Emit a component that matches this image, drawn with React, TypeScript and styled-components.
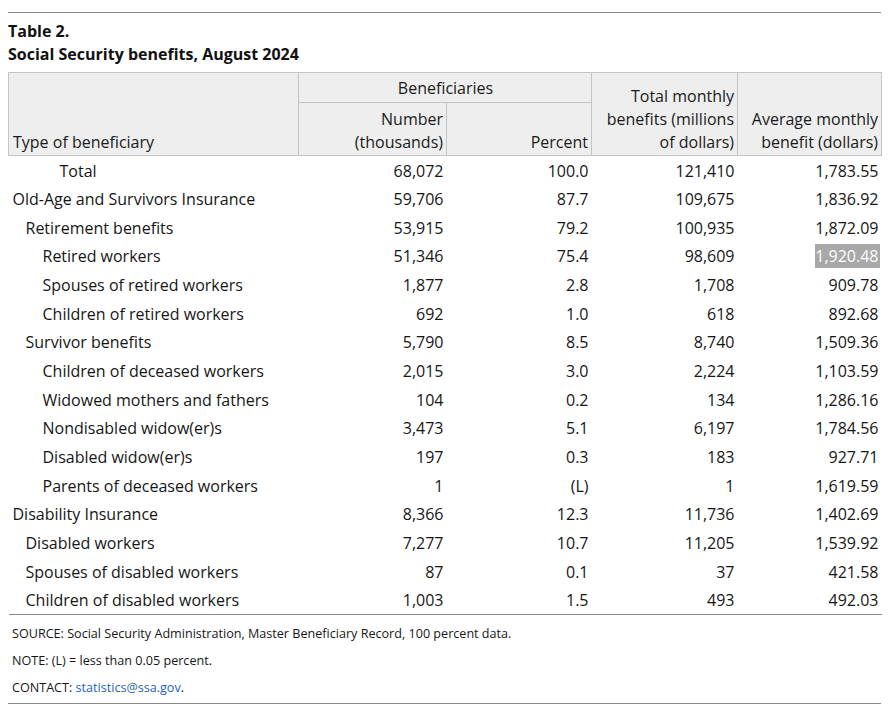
import React from "react";
import styled, { createGlobalStyle } from "styled-components";

const GlobalStyle = createGlobalStyle`
  html, body { margin: 0; padding: 0; background: #ffffff; }
  body { font-family: "Segoe UI", "Open Sans", "Noto Sans", sans-serif; color: #161616; }
`;

const Page = styled.div`
  padding: 12px 8px 0 8px;
  width: 873px;
`;

const TopRule = styled.hr`
  margin: 0;
  border: 0;
  border-top: 1px solid #8a8a8a;
`;

const Caption = styled.div`
  padding: 7px 0 6px 0;
  font-weight: 700;
  font-size: 16px;
  line-height: 23px;
  color: #111;
`;

const Table = styled.table`
  width: 873px;
  border-collapse: collapse;
  table-layout: fixed;
  font-size: 16px;
  border-bottom: 1px solid #8a8a8a;
`;

const HeadCell = styled.th<{ $align?: string; $valign?: string; $height?: number }>`
  background: #eeeeee;
  border: 1px solid #c4c4c4;
  font-weight: 400;
  color: #1a1a1a;
  text-align: ${(p) => p.$align || "right"};
  vertical-align: ${(p) => p.$valign || "bottom"};
  line-height: 23px;
  padding: 3px 3px 1px 4px;
  height: ${(p) => (p.$height ? `${p.$height}px` : "auto")};
  box-sizing: border-box;
  white-space: nowrap;
`;

const Row = styled.tr`
  height: 28.67px;
`;

const LabelCell = styled.td<{ $indent: number }>`
  padding: 2px 4px 0 ${(p) => 4 + p.$indent}px;
  line-height: 23px;
  text-align: left;
  white-space: nowrap;
`;

const NumCell = styled.td`
  padding: 2px 3px 0 4px;
  line-height: 23px;
  text-align: right;
  white-space: nowrap;
`;

const Highlight = styled.span`
  background: #a8a8a8;
  color: #ffffff;
  padding: 1px 1px 1px 0;
  margin-right: -1px;
`;

const Notes = styled.div`
  padding: 5px 4px 2px 4px;
  border-bottom: 1px solid #8a8a8a;
  font-size: 12.6px;
  line-height: 27px;
  color: #161616;
`;

const Note = styled.p`
  margin: 0;
`;

const Link = styled.a`
  color: #1f5fc4;
  text-decoration: none;
`;

type RowData = {
  label: string;
  indent: number;
  num: string;
  pct: string;
  total: string;
  avg: string;
  highlight?: boolean;
};

const rows: RowData[] = [
  { label: "Total", indent: 47, num: "68,072", pct: "100.0", total: "121,410", avg: "1,783.55" },
  { label: "Old-Age and Survivors Insurance", indent: 0, num: "59,706", pct: "87.7", total: "109,675", avg: "1,836.92" },
  { label: "Retirement benefits", indent: 13, num: "53,915", pct: "79.2", total: "100,935", avg: "1,872.09" },
  { label: "Retired workers", indent: 30, num: "51,346", pct: "75.4", total: "98,609", avg: "1,920.48", highlight: true },
  { label: "Spouses of retired workers", indent: 30, num: "1,877", pct: "2.8", total: "1,708", avg: "909.78" },
  { label: "Children of retired workers", indent: 30, num: "692", pct: "1.0", total: "618", avg: "892.68" },
  { label: "Survivor benefits", indent: 13, num: "5,790", pct: "8.5", total: "8,740", avg: "1,509.36" },
  { label: "Children of deceased workers", indent: 30, num: "2,015", pct: "3.0", total: "2,224", avg: "1,103.59" },
  { label: "Widowed mothers and fathers", indent: 30, num: "104", pct: "0.2", total: "134", avg: "1,286.16" },
  { label: "Nondisabled widow(er)s", indent: 30, num: "3,473", pct: "5.1", total: "6,197", avg: "1,784.56" },
  { label: "Disabled widow(er)s", indent: 30, num: "197", pct: "0.3", total: "183", avg: "927.71" },
  { label: "Parents of deceased workers", indent: 30, num: "1", pct: "(L)", total: "1", avg: "1,619.59" },
  { label: "Disability Insurance", indent: 0, num: "8,366", pct: "12.3", total: "11,736", avg: "1,402.69" },
  { label: "Disabled workers", indent: 13, num: "7,277", pct: "10.7", total: "11,205", avg: "1,539.92" },
  { label: "Spouses of disabled workers", indent: 13, num: "87", pct: "0.1", total: "37", avg: "421.58" },
  { label: "Children of disabled workers", indent: 13, num: "1,003", pct: "1.5", total: "493", avg: "492.03" },
];

export default function App() {
  return (
    <Page>
      <GlobalStyle />
      <TopRule />
      <Caption>
        Table 2.
        <br />
        Social Security benefits, August 2024
      </Caption>
      <Table>
        <colgroup>
          <col style={{ width: 290 }} />
          <col style={{ width: 148 }} />
          <col style={{ width: 145 }} />
          <col style={{ width: 146 }} />
          <col style={{ width: 144 }} />
        </colgroup>
        <thead>
          <tr>
            <HeadCell rowSpan={2} $align="left">Type of beneficiary</HeadCell>
            <HeadCell colSpan={2} $align="center" $valign="middle" $height={30}>
              Beneficiaries
            </HeadCell>
            <HeadCell rowSpan={2}>
              Total monthly
              <br />
              benefits (millions
              <br />
              of dollars)
            </HeadCell>
            <HeadCell rowSpan={2}>
              Average monthly
              <br />
              benefit (dollars)
            </HeadCell>
          </tr>
          <tr>
            <HeadCell $height={53}>
              Number
              <br />
              (thousands)
            </HeadCell>
            <HeadCell>Percent</HeadCell>
          </tr>
        </thead>
        <tbody>
          {rows.map((r) => (
            <Row key={r.label}>
              <LabelCell $indent={r.indent}>{r.label}</LabelCell>
              <NumCell>{r.num}</NumCell>
              <NumCell>{r.pct}</NumCell>
              <NumCell>{r.total}</NumCell>
              <NumCell>{r.highlight ? <Highlight>{r.avg}</Highlight> : r.avg}</NumCell>
            </Row>
          ))}
        </tbody>
      </Table>
      <Notes>
        <Note>SOURCE: Social Security Administration, Master Beneficiary Record, 100 percent data.</Note>
        <Note>NOTE: (L) = less than 0.05 percent.</Note>
        <Note>
          CONTACT: <Link href="mailto:statistics@ssa.gov">statistics@ssa.gov</Link>.
        </Note>
      </Notes>
    </Page>
  );
}
